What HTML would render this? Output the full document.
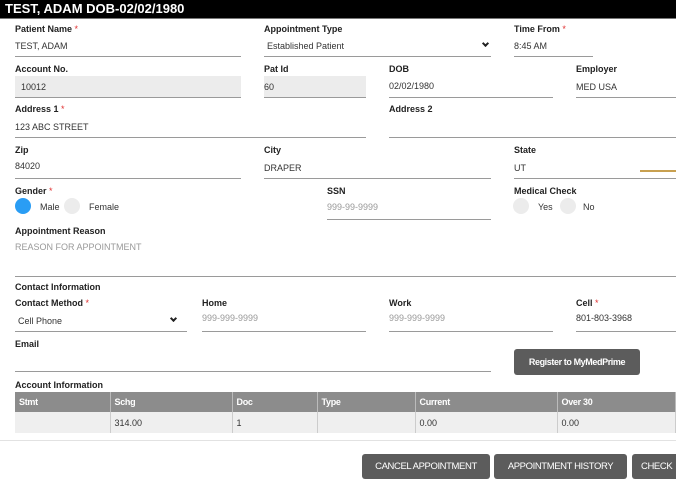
<!DOCTYPE html>
<html><head><meta charset="utf-8"><style>
*{margin:0;padding:0;box-sizing:border-box}
body{width:676px;height:486px;overflow:hidden;background:#fff;font-family:"Liberation Sans",Arial,sans-serif;position:relative;color:#222}
.a{position:absolute;white-space:nowrap}
.l{font-size:9px;font-weight:bold;color:#222}
.v{font-size:9px;color:#333}
.p{font-size:9px;color:#999}
.r{color:#e03030;font-weight:normal}
.u{position:absolute;height:1px;background:#9a9a9a}
.box{position:absolute;background:#ececec;border-bottom:1px solid #9a9a9a}
.c{position:absolute;width:16px;height:16px;border-radius:50%;background:#ececec}
.btn{position:absolute;background:#5c5c5c;color:#fff;font-size:9.5px;text-align:center;border-radius:3px;letter-spacing:-0.4px}
.chev{position:absolute;width:5px;height:5px;border-right:2px solid #222;border-bottom:2px solid #222;transform:rotate(45deg)}
table{position:absolute;left:15px;top:392px;width:661px;border-collapse:collapse;font-size:9px}
th{background:#8c8c8c;color:#fff;text-align:left;height:20px;padding-left:4px;border-right:1px solid #bbb;letter-spacing:-0.3px}
td{background:#efefef;height:21px;padding-left:4px;border-right:1px solid #ccc;color:#333}
</style></head><body>
<div class="a" style="left:0;top:0;width:676px;height:19px;background:#000;border-bottom:1px solid #777"></div>
<div class="a" style="left:5px;top:1px;font-size:13px;font-weight:bold;color:#fff">TEST, ADAM DOB-02/02/1980</div>

<div class="a l" style="left:15px;top:24px">Patient Name <span class="r">*</span></div>
<div class="a v" style="left:15px;top:41px">TEST, ADAM</div>
<div class="u" style="left:15px;top:56px;width:226px"></div>
<div class="a l" style="left:264px;top:24px">Appointment Type</div>
<div class="a v" style="left:267px;top:41px">Established Patient</div>
<div class="chev" style="left:483px;top:41px"></div>
<div class="u" style="left:264px;top:56px;width:227px"></div>
<div class="a l" style="left:514px;top:24px">Time From <span class="r">*</span></div>
<div class="a v" style="left:514px;top:41px">8:45 AM</div>
<div class="u" style="left:514px;top:56px;width:79px"></div>

<div class="a l" style="left:15px;top:64px">Account No.</div>
<div class="box" style="left:15px;top:76px;width:226px;height:22px"></div>
<div class="a v" style="left:21px;top:82px">10012</div>
<div class="a l" style="left:264px;top:64px">Pat Id</div>
<div class="box" style="left:264px;top:76px;width:102px;height:22px"></div>
<div class="a v" style="left:264px;top:82px">60</div>
<div class="a l" style="left:389px;top:64px">DOB</div>
<div class="a v" style="left:389px;top:81px">02/02/1980</div>
<div class="u" style="left:389px;top:97px;width:164px"></div>
<div class="a l" style="left:576px;top:64px">Employer</div>
<div class="a v" style="left:576px;top:82px">MED USA</div>
<div class="u" style="left:576px;top:97px;width:100px"></div>

<div class="a l" style="left:15px;top:104px">Address 1 <span class="r">*</span></div>
<div class="a v" style="left:15px;top:122px">123 ABC STREET</div>
<div class="u" style="left:15px;top:137px;width:351px"></div>
<div class="a l" style="left:389px;top:104px">Address 2</div>
<div class="u" style="left:389px;top:137px;width:287px"></div>

<div class="a l" style="left:15px;top:145px">Zip</div>
<div class="a v" style="left:15px;top:161px">84020</div>
<div class="u" style="left:15px;top:178px;width:226px"></div>
<div class="a l" style="left:264px;top:145px">City</div>
<div class="a v" style="left:264px;top:163px">DRAPER</div>
<div class="u" style="left:264px;top:178px;width:227px"></div>
<div class="a l" style="left:514px;top:145px">State</div>
<div class="a v" style="left:514px;top:163px">UT</div>
<div class="u" style="left:514px;top:178px;width:162px"></div>
<div class="a" style="left:640px;top:170px;width:36px;height:2px;background:#c8a050"></div>

<div class="a l" style="left:15px;top:186px">Gender <span class="r">*</span></div>
<div class="c" style="left:15px;top:198px;background:#2a9df4"></div>
<div class="a v" style="left:40px;top:202px">Male</div>
<div class="c" style="left:64px;top:198px"></div>
<div class="a v" style="left:89px;top:202px">Female</div>
<div class="a l" style="left:327px;top:186px">SSN</div>
<div class="a p" style="left:327px;top:202px">999-99-9999</div>
<div class="u" style="left:327px;top:219px;width:164px"></div>
<div class="a l" style="left:514px;top:186px">Medical Check</div>
<div class="c" style="left:513px;top:198px"></div>
<div class="a v" style="left:538px;top:202px">Yes</div>
<div class="c" style="left:560px;top:198px"></div>
<div class="a v" style="left:583px;top:202px">No</div>

<div class="a l" style="left:15px;top:226px">Appointment Reason</div>
<div class="a p" style="left:15px;top:242px">REASON FOR APPOINTMENT</div>
<div class="u" style="left:15px;top:276px;width:661px"></div>

<div class="a l" style="left:15px;top:282px;font-weight:600">Contact Information</div>
<div class="a l" style="left:15px;top:298px">Contact Method <span class="r">*</span></div>
<div class="a v" style="left:18px;top:316px">Cell Phone</div>
<div class="chev" style="left:171px;top:316px"></div>
<div class="u" style="left:15px;top:331px;width:172px"></div>
<div class="a l" style="left:202px;top:298px">Home</div>
<div class="a p" style="left:202px;top:313px">999-999-9999</div>
<div class="u" style="left:202px;top:331px;width:164px"></div>
<div class="a l" style="left:389px;top:298px">Work</div>
<div class="a p" style="left:389px;top:313px">999-999-9999</div>
<div class="u" style="left:389px;top:331px;width:164px"></div>
<div class="a l" style="left:576px;top:298px">Cell <span class="r">*</span></div>
<div class="a v" style="left:576px;top:313px">801-803-3968</div>
<div class="u" style="left:576px;top:331px;width:100px"></div>

<div class="a l" style="left:15px;top:339px">Email</div>
<div class="u" style="left:15px;top:371px;width:476px"></div>
<div class="btn" style="left:514px;top:349px;width:126px;height:26px;line-height:26px;font-weight:bold;font-size:9px">Register to MyMedPrime</div>

<div class="a l" style="left:15px;top:380px;font-weight:600">Account Information</div>
<table>
<tr><th style="width:95px">Stmt</th><th style="width:122px">Schg</th><th style="width:85px">Doc</th><th style="width:98px">Type</th><th style="width:142px">Current</th><th>Over 30</th></tr>
<tr><td></td><td>314.00</td><td>1</td><td></td><td>0.00</td><td>0.00</td></tr>
</table>
<div class="a" style="left:0;top:440px;width:676px;height:1px;background:#e2e2e2"></div>

<div class="btn" style="left:362px;top:454px;width:128px;height:25px;line-height:25px">CANCEL APPOINTMENT</div>
<div class="btn" style="left:494px;top:454px;width:133px;height:25px;line-height:25px">APPOINTMENT HISTORY</div>
<div class="btn" style="left:632px;top:454px;width:60px;height:25px;line-height:25px;text-align:left;padding-left:9px">CHECK</div>
</body></html>
